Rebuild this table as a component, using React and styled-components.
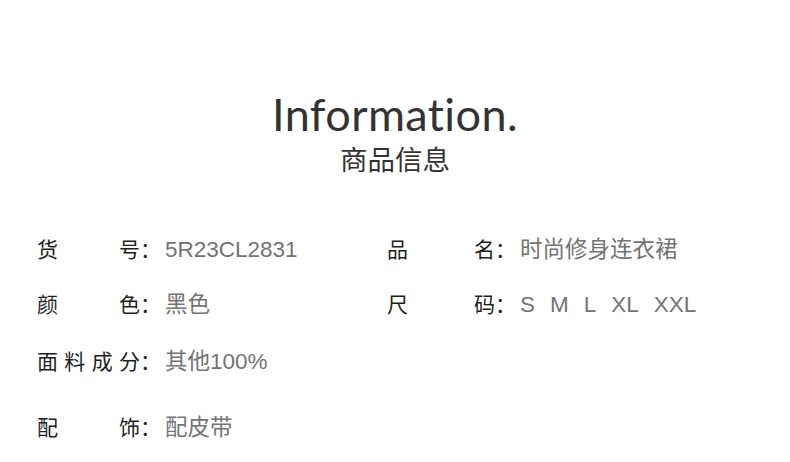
import React from 'react'
import styled, { createGlobalStyle } from 'styled-components'

const GlobalStyle = createGlobalStyle`
  html, body {
    margin: 0;
    padding: 0;
    background: #ffffff;
  }
  body {
    font-family: "Liberation Sans", "Noto Sans CJK SC", sans-serif;
  }
`

const Page = styled.div`
  width: 790px;
  height: 462px;
  background: #fff;
  display: flex;
  flex-direction: column;
  overflow: hidden;
`

const Header = styled.header`
  display: flex;
  flex-direction: column;
  align-items: center;
  padding-top: 88px;
`

const Title = styled.h1`
  margin: 0;
  font-family: Lato, "Noto Sans", sans-serif;
  font-weight: 400;
  font-size: 45px;
  line-height: 52px;
  color: #333;
  letter-spacing: 0.4px;
`

const Subtitle = styled.h2`
  margin: 3px 0 0;
  font-family: "Noto Sans CJK SC", sans-serif;
  font-weight: 400;
  font-size: 27.5px;
  line-height: 31px;
  color: #333;
`

const Specs = styled.section`
  display: flex;
  flex-direction: column;
  padding-left: 37px;
  margin-top: 59px;
`

const Row = styled.div`
  display: grid;
  grid-template-columns: 350px 1fr;
  height: 30px;
  align-items: center;
  margin-top: ${p => p.$gap || 0}px;
`

const Field = styled.div`
  display: flex;
  align-items: baseline;
  white-space: nowrap;
`

const Label = styled.span`
  display: inline-block;
  width: ${p => p.$width || 103}px;
  text-align: justify;
  text-align-last: justify;
  font-family: "Noto Sans CJK SC", sans-serif;
  font-size: 21px;
  line-height: 30px;
  color: #1e1e1e;
`

const Colon = styled.span`
  display: inline-block;
  font-family: "Noto Sans CJK SC", sans-serif;
  font-size: 21px;
  line-height: 30px;
  color: #1e1e1e;
  width: 25px;
`

const Value = styled.span`
  display: inline-flex;
  font-family: "Liberation Sans", "Noto Sans CJK SC", sans-serif;
  font-size: 22.5px;
  line-height: 30px;
  color: #737373;
`

const Size = styled.span`
  margin-right: 15px;
  &:last-child { margin-right: 0; }
`

function Spec ({ label, width, children }) {
  return (
    <Field>
      <Label $width={width}>{label}</Label>
      <Colon>：</Colon>
      {children}
    </Field>
  )
}

const sizes = ['S', 'M', 'L', 'XL', 'XXL']

export default function App () {
  return (
    <Page>
      <GlobalStyle />
      <Header>
        <Title>Information.</Title>
        <Subtitle>商品信息</Subtitle>
      </Header>
      <Specs>
        <Row>
          <Spec label='货号'><Value>5R23CL2831</Value></Spec>
          <Spec label='品名' width={108}><Value>时尚修身连衣裙</Value></Spec>
        </Row>
        <Row $gap={25}>
          <Spec label='颜色'><Value>黑色</Value></Spec>
          <Spec label='尺码' width={108}>
            <Value>
              {sizes.map(s => <Size key={s}>{s}</Size>)}
            </Value>
          </Spec>
        </Row>
        <Row $gap={27}>
          <Spec label='面料成分'><Value>其他100%</Value></Spec>
        </Row>
        <Row $gap={36}>
          <Spec label='配饰'><Value>配皮带</Value></Spec>
        </Row>
      </Specs>
    </Page>
  )
}
